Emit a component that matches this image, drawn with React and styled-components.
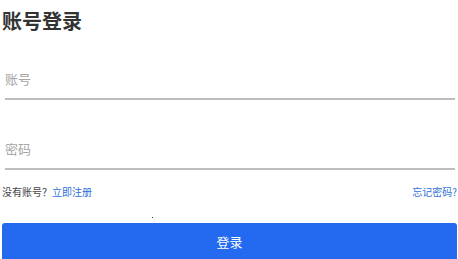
import React from "react";
import styled, { createGlobalStyle } from "styled-components";

const GlobalStyle = createGlobalStyle`
  html, body {
    margin: 0;
    padding: 0;
    background: #fff;
    overflow: hidden;
  }
  body {
    font-family: "Noto Sans CJK SC", "Noto Sans", sans-serif;
  }
`;

const Page = styled.div`
  width: 458px;
  display: flex;
  flex-direction: column;

  & > * {
    flex-shrink: 0;
  }
`;

const Title = styled.h1`
  margin: 6px 0 0 2px;
  font-size: 20px;
  line-height: 30px;
  font-weight: 700;
  color: #333;
`;

const Field = styled.div`
  margin: ${(props) => props.$top} 3px 0 5px;
  border-bottom: 2px solid #bdbdbd;
  height: 40px;
  display: flex;
  align-items: center;
`;

const Input = styled.input`
  border: none;
  outline: none;
  width: 100%;
  padding: 0;
  font-family: inherit;
  font-size: 13px;
  color: #333;
  background: transparent;

  &::placeholder {
    color: #a6a6a6;
  }
`;

const LinkRow = styled.div`
  display: flex;
  justify-content: space-between;
  align-items: center;
  margin: 15px 1px 0 2px;
  font-size: 10px;
  line-height: 14px;
`;

const Hint = styled.span`
  color: #444;
`;

const BlueLink = styled.a`
  color: #2f6fd6;
  text-decoration: none;
  cursor: pointer;
`;

const Dot = styled.div`
  width: 1px;
  height: 1px;
  background: #333;
  margin: 18px 0 0 152px;
`;

const SubmitButton = styled.button`
  margin: 5px 1px 0 2px;
  height: 44px;
  border: none;
  border-radius: 3px;
  background: #236af0;
  color: #fff;
  font-family: inherit;
  font-size: 13px;
  display: flex;
  align-items: flex-start;
  justify-content: center;
  padding-top: 9px;
  cursor: pointer;
`;

export default function App() {
  return (
    <>
      <GlobalStyle />
      <Page>
        <Title>账号登录</Title>
        <Field $top={"22px"}>
          <Input type="text" placeholder="账号" />
        </Field>
        <Field $top={"28px"}>
          <Input type="password" placeholder="密码" />
        </Field>
        <LinkRow>
          <Hint>
            没有账号？<BlueLink>立即注册</BlueLink>
          </Hint>
          <BlueLink>忘记密码?</BlueLink>
        </LinkRow>
        <Dot />
        <SubmitButton>登录</SubmitButton>
      </Page>
    </>
  );
}
